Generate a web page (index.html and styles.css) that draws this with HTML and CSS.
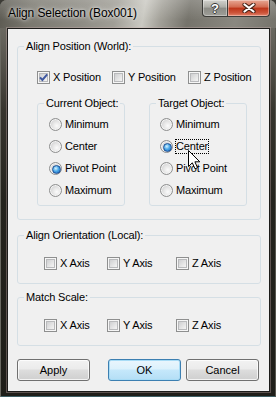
FILE: index.html
```html
<!DOCTYPE html>
<html lang="en">
<head>
    <meta charset="UTF-8">
    <title>Align Selection (Box001)</title>
    <link rel="stylesheet" href="styles.css">
</head>
<body>
    <div class="window">
        <div class="titlebar">
            <span class="title">Align Selection (Box001)</span>
            <div class="caption-buttons">
                <span class="cap-btn help">?</span>
                <span class="cap-btn close">
                    <svg width="14" height="10" viewBox="0 0 14 10">
                        <path d="M2.5 1.5 L11.5 8.5 M11.5 1.5 L2.5 8.5" stroke="#4a2418" stroke-width="4.2" stroke-linecap="round"/>
                        <path d="M2.5 1.5 L11.5 8.5 M11.5 1.5 L2.5 8.5" stroke="#fff" stroke-width="2.2" stroke-linecap="round"/>
                    </svg>
                </span>
            </div>
        </div>

        <div class="client">
            <fieldset class="group">
                <legend>Align Position (World):</legend>
                <div class="check-row pos-row">
                    <label class="opt"><span class="box"><svg width="11" height="11" viewBox="0 0 11 11"><path d="M2 5.3 L4.4 8 L9.2 2.4" fill="none" stroke="#3f58a0" stroke-width="2"/></svg></span>X Position</label>
                    <label class="opt"><span class="box"></span>Y Position</label>
                    <label class="opt"><span class="box"></span>Z Position</label>
                </div>
                <div class="objects">
                    <fieldset class="sub current">
                        <legend>Current Object:</legend>
                        <div class="radios">
                            <label class="opt"><span class="radio"></span>Minimum</label>
                            <label class="opt"><span class="radio"></span>Center</label>
                            <label class="opt"><span class="radio on"></span>Pivot Point</label>
                            <label class="opt"><span class="radio"></span>Maximum</label>
                        </div>
                    </fieldset>
                    <fieldset class="sub target">
                        <legend>Target Object:</legend>
                        <div class="radios">
                            <label class="opt"><span class="radio"></span>Minimum</label>
                            <label class="opt"><span class="radio on"></span><span class="focus">Center</span></label>
                            <label class="opt"><span class="radio"></span>Pivot Point</label>
                            <label class="opt"><span class="radio"></span>Maximum</label>
                        </div>
                    </fieldset>
                </div>
            </fieldset>

            <fieldset class="group orient">
                <legend>Align Orientation (Local):</legend>
                <div class="check-row axis-row">
                    <label class="opt"><span class="box"></span>X Axis</label>
                    <label class="opt"><span class="box"></span>Y Axis</label>
                    <label class="opt"><span class="box"></span>Z Axis</label>
                </div>
            </fieldset>

            <fieldset class="group scale">
                <legend>Match Scale:</legend>
                <div class="check-row axis-row">
                    <label class="opt"><span class="box"></span>X Axis</label>
                    <label class="opt"><span class="box"></span>Y Axis</label>
                    <label class="opt"><span class="box"></span>Z Axis</label>
                </div>
            </fieldset>

            <div class="buttons">
                <button class="btn">Apply</button>
                <button class="btn default">OK</button>
                <button class="btn cancel">Cancel</button>
            </div>

            <!-- mouse pointer resting over the Target group -->
            <svg class="cursor" width="13" height="20" viewBox="0 0 13 20">
                <path d="M0.5 0.5 L0.5 16.5 L4.3 12.8 L7 18.8 L9.5 17.7 L6.9 11.8 L11.8 11.8 Z" fill="#fff" stroke="#000" stroke-width="1" stroke-linejoin="round"/>
            </svg>
        </div>
    </div>
</body>
</html>
```

FILE: styles.css
```css
* {
    box-sizing: border-box;
}
body {
    margin: 0;
    background-color: #3c3b36;
    font-family: "Liberation Sans", Arial, sans-serif;
    font-size: 11px;
    color: #000;
}
.window {
    width: 276px;
    height: 397px;
    display: flex;
    flex-direction: column;
    border-radius: 7px 7px 0 0;
    overflow: hidden;
    background: linear-gradient(180deg, #77756d 0, #64625a 40px, #37352e 110px, #24231d 200px, #1f1e19 100%);
    box-shadow: inset 1px 0 0 #6a6961, inset -1px 0 0 #57564e, inset 0 -1px 0 #3f6066;
}
.titlebar {
    height: 28px;
    flex: none;
    display: flex;
    justify-content: space-between;
    align-items: flex-start;
    padding: 0 6px 0 8px;
    background:
        linear-gradient(180deg, rgba(255, 255, 255, 0.2), rgba(255, 255, 255, 0) 70%),
        linear-gradient(100deg, #5b5951 0%, #7a786f 12%, #8d8b83 30%, #a09e96 42%, #cac9c2 52%, #a4a29a 58%, #75736b 68%, #8a8880 85%, #75736b 100%);
}
.title {
    padding-top: 6px;
    line-height: 15px;
    font-size: 12px;
    letter-spacing: -0.1px;
    text-shadow: 0 0 6px rgba(255, 255, 255, 0.9), 0 0 3px rgba(255, 255, 255, 0.7);
}
.caption-buttons {
    display: flex;
    height: 17px;
}
.cap-btn {
    display: flex;
    align-items: center;
    justify-content: center;
    height: 17px;
    border: 1px solid #3b3b38;
    border-top: none;
    box-shadow: inset 0 0 0 1px rgba(255, 255, 255, 0.35);
}
.help {
    width: 25px;
    border-right: none;
    border-radius: 0 0 0 4px;
    background: linear-gradient(180deg, #d2d2cd 0, #acaca6 45%, #8b8b85 50%, #9e9e98 100%);
    color: #fff;
    font-weight: bold;
    font-size: 13px;
    text-shadow: 1px 0 0 #3a3a3a, -1px 0 0 #3a3a3a, 0 1px 0 #3a3a3a, 0 -1px 0 #3a3a3a;
}
.close {
    width: 43px;
    border-radius: 0 0 4px 0;
    background: linear-gradient(180deg, #e8a894 0, #d26a50 45%, #bd3418 50%, #cd553a 80%, #e2846c 100%);
}
.client {
    flex: 1;
    position: relative;
    margin: 0 6px 5px 7px;
    padding-top: 11px;
    letter-spacing: -0.15px;
    background-color: #f0f0f0;
    border: 1px solid #1c1c1a;
    box-shadow: 0 0 0 1px rgba(210, 180, 180, 0.35);
}
fieldset {
    min-width: 0;
    border: 1px solid #d5dfe5;
    border-radius: 3px;
}
legend {
    margin-left: 6px;
    padding: 0 2px;
    line-height: 13px;
}
.group {
    margin: 0 8px 0 9px;
    padding: 0 0 13px;
}
.orient {
    margin-top: 9px;
}
.scale {
    margin-top: 7px;
}
.check-row {
    display: grid;
    margin-top: 18px;
}
.pos-row {
    padding-left: 19px;
    grid-template-columns: 75px 76px auto;
}
.axis-row {
    margin-top: 15px;
    padding-left: 26px;
    grid-template-columns: 63px 69px auto;
}
.objects {
    display: flex;
    gap: 24px;
    margin-top: 13px;
    padding-left: 19px;
}
.sub {
    margin: 0;
    padding: 0 0 8px;
}
.current {
    width: 88px;
}
.target {
    width: 98px;
}
.radios {
    display: flex;
    flex-direction: column;
    gap: 9px;
    padding: 8px 0 0 11px;
}
.target .radios {
    padding-left: 10px;
}
.opt {
    display: flex;
    align-items: center;
    height: 13px;
    line-height: 13px;
    white-space: nowrap;
}
.box {
    width: 13px;
    height: 13px;
    flex: none;
    margin-right: 3px;
    border: 1px solid #8e8f8f;
    background: linear-gradient(135deg, #c4c5c7, #eeeeee 70%, #f8f8f8);
    box-shadow: inset 0 0 0 1px #f6f6f6, inset 0 0 0 2px #b9babc;
}
.box svg {
    display: block;
}
.radio {
    position: relative;
    width: 13px;
    height: 13px;
    flex: none;
    margin-right: 3px;
    border: 1px solid #8e8f8f;
    border-radius: 50%;
    background: radial-gradient(circle at 62% 62%, #fbfbfb 0, #e4e4e4 45%, #bfc0c2 100%);
    box-shadow: inset 0 0 0 1px #f4f4f4;
}
.radio.on::after {
    content: "";
    position: absolute;
    left: 2px;
    top: 2px;
    width: 7px;
    height: 7px;
    border-radius: 50%;
    border: 1px solid #1d4f94;
    background: radial-gradient(circle at 40% 35%, #d8f4ff 0, #4aa8e8 45%, #1b5db4 100%);
}
.focus {
    outline: 1px dotted #000;
}
.buttons {
    display: flex;
    margin-top: 13px;
    padding-left: 9px;
}
.btn {
    width: 73px;
    height: 22px;
    padding: 0;
    font-family: "Liberation Sans", Arial, sans-serif;
    font-size: 11px;
    color: #000;
    border: 1px solid #707070;
    border-radius: 3px;
    background: linear-gradient(180deg, #f2f2f2 0, #ebebeb 45%, #dddddd 50%, #cfcfcf 100%);
    box-shadow: inset 0 0 0 1px rgba(255, 255, 255, 0.75);
}
.btn.default {
    margin-left: 18px;
    border-color: #3c7fb1;
    background: linear-gradient(180deg, #eaf6fd 0, #dcf1fc 45%, #c5e8fb 50%, #b4def5 100%);
    box-shadow: inset 0 0 0 1px #a8dcf6;
}
.btn.cancel {
    margin-left: 5px;
}
.cursor {
    position: absolute;
    left: 180px;
    top: 121px;
}
```
